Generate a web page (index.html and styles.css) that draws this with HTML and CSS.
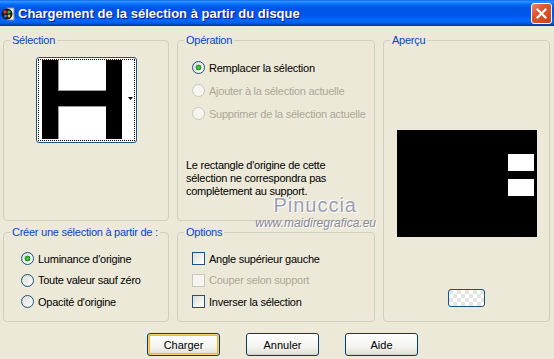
FILE: index.html
```html
<!DOCTYPE html>
<html>
    <head>
        <meta charset="utf-8">
        <title>Chargement de la sélection à partir du disque</title>
        <link rel="stylesheet" href="styles.css">
    </head>
    <body>
        <div class="window">
            <header class="titlebar">
                <span class="app-icon">
                    <svg width="14" height="14" viewBox="0 0 14 14">
                        <rect x="6" y="1" width="7" height="12" fill="#f4f4f4" stroke="#7a8aa8"/>
                        <circle cx="6" cy="7" r="5.5" fill="#1a1a1a"/>
                        <circle cx="4" cy="5" r="1.8" fill="#e03030"/>
                        <circle cx="8" cy="5" r="1.6" fill="#30b040"/>
                        <circle cx="4.5" cy="9" r="1.6" fill="#3070e0"/>
                        <circle cx="8" cy="9" r="1.4" fill="#e0c030"/>
                    </svg>
                </span>
                <h1 class="title">Chargement de la sélection à partir du disque</h1>
                <button class="close" type="button">
                    <svg width="13" height="13" viewBox="0 0 13 13">
                        <path d="M2.5 2.5 L10.5 10.5 M10.5 2.5 L2.5 10.5" stroke="#fff" stroke-width="2.2" stroke-linecap="square"/>
                    </svg>
                </button>
            </header>

            <main class="content">
                <div class="groups">

                    <fieldset class="group g-selection">
                        <legend>Sélection</legend>
                        <div class="thumb">
                            <div class="thumb-focus">
                                <svg width="95" height="79" viewBox="0 0 95 79">
                                    <rect x="0" y="0" width="95" height="79" fill="#fff"/>
                                    <rect x="3" y="0" width="16" height="79" fill="#000"/>
                                    <rect x="67" y="0" width="16" height="79" fill="#000"/>
                                    <rect x="19" y="31" width="48" height="15" fill="#000"/>
                                    <rect x="19" y="0" width="1" height="31" fill="#9a9a9a"/>
                                    <rect x="19" y="30" width="48" height="1" fill="#9a9a9a"/>
                                    <rect x="19" y="46" width="1" height="33" fill="#9a9a9a"/>
                                    <rect x="19" y="46" width="48" height="1" fill="#9a9a9a"/>
                                    <path d="M89 37 h5 l-2.5 3 z" fill="#000"/>
                                </svg>
                            </div>
                        </div>
                    </fieldset>

                    <fieldset class="group g-operation">
                        <legend>Opération</legend>
                        <div class="choices">
                            <label class="choice"><input type="radio" name="op" checked> Remplacer la sélection</label>
                            <label class="choice disabled"><input type="radio" name="op" disabled> Ajouter à la sélection actuelle</label>
                            <label class="choice disabled"><input type="radio" name="op" disabled> Supprimer de la sélection actuelle</label>
                        </div>
                        <p class="note">Le rectangle d'origine de cette sélection ne correspondra pas complètement au support.</p>
                    </fieldset>

                    <fieldset class="group g-preview">
                        <legend>Aperçu</legend>
                        <div class="preview">
                            <span class="mark mark-top"></span>
                            <span class="mark mark-bottom"></span>
                        </div>
                        <button class="mini" type="button"></button>
                    </fieldset>

                    <fieldset class="group g-source">
                        <legend>Créer une sélection à partir de :</legend>
                        <div class="choices">
                            <label class="choice"><input type="radio" name="src" checked> Luminance d'origine</label>
                            <label class="choice"><input type="radio" name="src"> Toute valeur sauf zéro</label>
                            <label class="choice"><input type="radio" name="src"> Opacité d'origine</label>
                        </div>
                    </fieldset>

                    <fieldset class="group g-options">
                        <legend>Options</legend>
                        <div class="choices">
                            <label class="choice"><input type="checkbox"> Angle supérieur gauche</label>
                            <label class="choice disabled"><input type="checkbox" disabled> Couper selon support</label>
                            <label class="choice"><input type="checkbox"> Inverser la sélection</label>
                        </div>
                    </fieldset>

                </div>

                <div class="actions">
                    <button class="btn default" type="button">Charger</button>
                    <button class="btn" type="button">Annuler</button>
                    <button class="btn" type="button">Aide</button>
                </div>

                <div class="watermark">
                    <span class="wm-name">Pinuccia</span>
                    <span class="wm-site">www.maidiregrafica.eu</span>
                </div>
            </main>
        </div>
    </body>
</html>
```
FILE: styles.css
```css
body
{
    margin: 0;
    background-color: #ece9d8;
    font-family: "Liberation Sans", Arial, sans-serif;
    font-size: 11px;
    letter-spacing: -0.25px;
    color: #000;
}

.window
{
    width: 554px;
    height: 359px;
    overflow: hidden;
    background-color: #ece9d8;
}

/* title bar */

.titlebar
{
    height: 26px;
    display: flex;
    align-items: center;
    background: linear-gradient(to bottom, #0058ee 0%, #3593ff 4%, #288eff 8%, #127dff 12%, #036ffc 16%, #0262ee 22%, #0057e5 30%, #0054e3 36%, #0055eb 56%, #005bf5 66%, #026afe 76%, #0062ef 86%, #0052d6 92%, #0040ab 96%, #003092 100%);
}

.app-icon
{
    width: 14px;
    height: 14px;
    margin: 1px 3px 0 1px;
}

.title
{
    flex: 1;
    margin: 0;
    font-family: "Liberation Sans", Arial, sans-serif;
    font-size: 13px;
    font-weight: bold;
    letter-spacing: 0;
    color: #fff;
    text-shadow: 1px 1px #0f1089;
}

.close
{
    width: 21px;
    height: 21px;
    margin: 1px 2px 0 0;
    padding: 0;
    border: 1px solid #fff;
    border-radius: 3px;
    background: linear-gradient(135deg, #ec8a6a 0%, #e2562f 35%, #cc4218 100%);
    display: flex;
    align-items: center;
    justify-content: center;
}

/* group boxes */

.content
{
    position: relative;
    padding: 8px 0 0 3px;
}

.groups
{
    display: grid;
    grid-template-columns: 166px 198px 167px;
    grid-template-rows: 187px 96px;
    column-gap: 8px;
    row-gap: 5px;
}

.group
{
    margin: 0;
    padding: 0;
    min-width: 0;
    border: 1px solid #d0d0bf;
    border-radius: 4px;
}

.group legend
{
    margin-left: 6px;
    padding: 0 2px;
    line-height: 13px;
    white-space: nowrap;
    color: #0046d5;
}

.g-preview
{
    grid-column: 3;
    grid-row: 1 / 3;
}

/* selection thumbnail */

.thumb
{
    width: 97px;
    height: 82px;
    margin: 10px auto 0;
    padding: 1px;
    border: 1px solid #1c5180;
    border-radius: 3px;
    background-color: #fff;
}

.thumb-focus
{
    height: 100%;
    border: 1px dotted #000;
    box-sizing: border-box;
}

.thumb-focus svg
{
    display: block;
}

/* radios and checkboxes */

.choices
{
    display: flex;
    flex-direction: column;
    margin-top: 9px;
    padding-left: 14px;
}

.g-source .choices
{
    padding-left: 17px;
}

.choice
{
    height: 23px;
    display: flex;
    align-items: center;
    gap: 4px;
    white-space: nowrap;
}

.g-source .choice,
.g-options .choice
{
    height: 21.5px;
}

.choice.disabled
{
    color: #aca899;
}

.choice input
{
    appearance: none;
    flex: none;
    width: 13px;
    height: 13px;
    margin: 0;
    border: 1px solid #1c5180;
    background: linear-gradient(135deg, #dcdcd7, #fff);
}

.choice input[type="radio"]
{
    border-radius: 50%;
}

.choice input[type="radio"]:checked
{
    background: radial-gradient(circle, #5ee05e 0, #21a121 2px, #1e8e1e 2.6px, transparent 3.2px), linear-gradient(135deg, #dcdcd7, #fff);
}

.choice input:disabled
{
    border-color: #cac8bb;
    background: #f6f5ef;
}

.note
{
    margin: 34px 0 0 8px;
    width: 180px;
    line-height: 13px;
}

/* preview */

.preview
{
    position: relative;
    width: 140px;
    height: 107px;
    margin: 83px auto 0;
    background-color: #000;
}

.mark
{
    position: absolute;
    right: 3px;
    width: 26px;
    height: 17px;
    background-color: #fff;
}

.mark-top
{
    top: 24px;
}

.mark-bottom
{
    top: 49px;
}

.mini
{
    display: block;
    width: 37px;
    height: 18px;
    margin: 52px auto 0;
    padding: 0;
    border: 1px solid #1c5180;
    border-radius: 3px;
    background: repeating-conic-gradient(#ffffff 0 25%, #e4e4e4 0 50%) 0 0 / 8px 8px;
}

/* buttons */

.actions
{
    display: flex;
    gap: 26px;
    margin-top: 11px;
    padding-left: 144px;
}

.btn
{
    width: 73px;
    height: 23px;
    padding: 0;
    border: 1px solid #003c74;
    border-radius: 3px;
    background: linear-gradient(to bottom, #ffffff 0%, #f4f4f0 60%, #e6e3d9 90%, #d6d0c5 100%);
    font-family: "Liberation Sans", Arial, sans-serif;
    font-size: 11px;
    color: #000;
}

.btn.default
{
    box-shadow: inset 0 0 0 1px #ffce6a, inset 0 0 0 2px #f8b330;
}

/* watermark laid over the dialog */

.watermark
{
    position: absolute;
    left: 250px;
    top: 168px;
    display: flex;
    flex-direction: column;
    align-items: flex-end;
    width: 126px;
    pointer-events: none;
    letter-spacing: 0;
}

.wm-name
{
    font-size: 20px;
    line-height: 22px;
    letter-spacing: 1px;
    color: #9c9cb2;
    text-shadow: 1px 1px 0 #fff, -1px -1px 0 #fff;
    margin-right: 19px;
}

.wm-site
{
    font-size: 12px;
    font-style: italic;
    line-height: 14px;
    color: #8a8a9c;
    text-shadow: 1px 1px 0 #fff;
}
```
